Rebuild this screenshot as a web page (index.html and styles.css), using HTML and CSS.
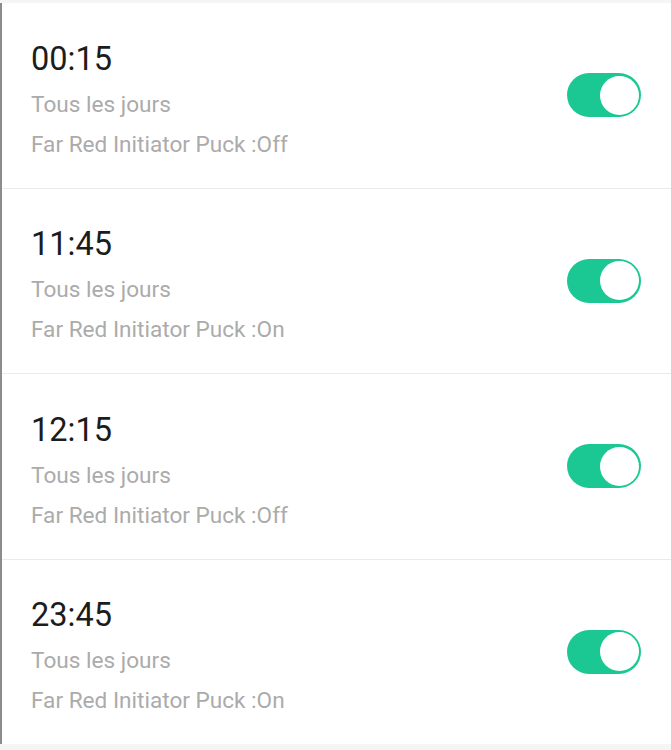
FILE: index.html
```html
<!DOCTYPE html>
<html lang="fr">
<head>
  <meta charset="UTF-8">
  <title>Programmations</title>
  <link rel="stylesheet" href="styles.css">
</head>
<body>
  <div class="schedule-list">
    <div class="schedule-row">
      <div class="schedule-info">
        <div class="schedule-time">00:15</div>
        <div class="schedule-days">Tous les jours</div>
        <div class="schedule-action">Far Red Initiator Puck :Off</div>
      </div>
      <div class="switch on"><span class="knob"></span></div>
    </div>

    <div class="schedule-row">
      <div class="schedule-info">
        <div class="schedule-time">11:45</div>
        <div class="schedule-days">Tous les jours</div>
        <div class="schedule-action">Far Red Initiator Puck :On</div>
      </div>
      <div class="switch on"><span class="knob"></span></div>
    </div>

    <div class="schedule-row">
      <div class="schedule-info">
        <div class="schedule-time">12:15</div>
        <div class="schedule-days">Tous les jours</div>
        <div class="schedule-action">Far Red Initiator Puck :Off</div>
      </div>
      <div class="switch on"><span class="knob"></span></div>
    </div>

    <div class="schedule-row">
      <div class="schedule-info">
        <div class="schedule-time">23:45</div>
        <div class="schedule-days">Tous les jours</div>
        <div class="schedule-action">Far Red Initiator Puck :On</div>
      </div>
      <div class="switch on"><span class="knob"></span></div>
    </div>
  </div>
</body>
</html>
```

FILE: styles.css
```css
body {
  margin: 0;
  background-color: #f5f5f5;
  font-family: Roboto, 'Noto Sans', sans-serif;
  height: 750px;
  overflow: hidden;
}
.schedule-list {
  margin-top: 3px;
  background-color: #fff;
  border-left: 2px solid #8c8c8c;
}
.schedule-row {
  display: flex;
  align-items: center;
  justify-content: space-between;
  height: 184.5px;
  padding: 0 30px 0 29px;
  border-bottom: 1px solid #ebebeb;
}
.schedule-row:last-child {
  border-bottom: none;
}
.schedule-info {
  display: flex;
  flex-direction: column;
  margin-top: 8px;
}
.schedule-time {
  font-size: 32.5px;
  line-height: 40px;
  color: #1c1c1c;
}
.schedule-days {
  font-size: 22.6px;
  line-height: 30px;
  margin-top: 11px;
  color: #ababab;
}
.schedule-action {
  font-size: 22.6px;
  line-height: 30px;
  margin-top: 10px;
  color: #ababab;
}
.switch {
  display: flex;
  align-items: center;
  justify-content: flex-start;
  width: 74px;
  height: 44px;
  padding: 0 2px;
  box-sizing: border-box;
  border-radius: 22px;
  background-color: #cfcfcf;
}
.switch.on {
  justify-content: flex-end;
  background-color: #1bc893;
}
.knob {
  width: 39px;
  height: 39px;
  border-radius: 50%;
  background-color: #fff;
}
```
